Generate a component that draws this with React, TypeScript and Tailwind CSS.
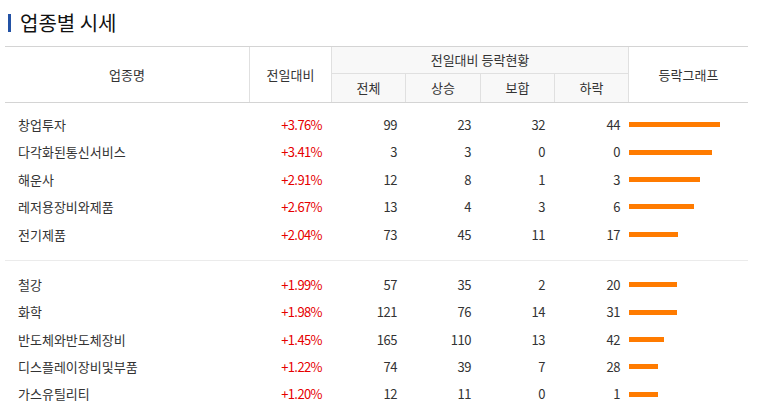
import React from 'react';

type Row = {
  name: string;
  rate: string;
  total: number;
  up: number;
  flat: number;
  down: number;
  bar: number;
};

const groups: Row[][] = [
  [
    { name: '창업투자', rate: '+3.76%', total: 99, up: 23, flat: 32, down: 44, bar: 91 },
    { name: '다각화된통신서비스', rate: '+3.41%', total: 3, up: 3, flat: 0, down: 0, bar: 83 },
    { name: '해운사', rate: '+2.91%', total: 12, up: 8, flat: 1, down: 3, bar: 71 },
    { name: '레저용장비와제품', rate: '+2.67%', total: 13, up: 4, flat: 3, down: 6, bar: 65 },
    { name: '전기제품', rate: '+2.04%', total: 73, up: 45, flat: 11, down: 17, bar: 49 },
  ],
  [
    { name: '철강', rate: '+1.99%', total: 57, up: 35, flat: 2, down: 20, bar: 48 },
    { name: '화학', rate: '+1.98%', total: 121, up: 76, flat: 14, down: 31, bar: 48 },
    { name: '반도체와반도체장비', rate: '+1.45%', total: 165, up: 110, flat: 13, down: 42, bar: 35 },
    { name: '디스플레이장비및부품', rate: '+1.22%', total: 74, up: 39, flat: 7, down: 28, bar: 29 },
    { name: '가스유틸리티', rate: '+1.20%', total: 12, up: 11, flat: 0, down: 1, bar: 29 },
  ],
];

const cols = 'grid grid-cols-[245px_82px_74px_75px_74px_74px_119px]';

function DataRow({ row }: { row: Row }) {
  return (
    <div className={`${cols} h-[27.4px] items-center text-[13px] text-[#333]`}>
      <div className="pl-[13px]">{row.name}</div>
      <div className="pr-[10px] text-right text-[#e60000] tracking-[-0.6px]">{row.rate}</div>
      <div className="pr-[9px] text-right tracking-[-0.5px]">{row.total}</div>
      <div className="pr-[10px] text-right tracking-[-0.5px]">{row.up}</div>
      <div className="pr-[10px] text-right tracking-[-0.5px]">{row.flat}</div>
      <div className="pr-[9px] text-right tracking-[-0.5px]">{row.down}</div>
      <div className="flex items-center">
        <span className="block h-[5px] bg-[#ff7b00]" style={{ width: row.bar }} />
      </div>
    </div>
  );
}

export default function App() {
  return (
    <div
      className="w-[763px] h-[414px] overflow-hidden bg-white"
      style={{ fontFamily: '"Noto Sans CJK KR", "Noto Sans", sans-serif' }}
    >
      {/* Title */}
      <div className="h-[46px] flex items-center pl-[8px]">
        <span className="block w-[3px] h-[18px] bg-[#2352a5]" />
        <h2 className="ml-[9px] text-[20px] leading-none text-[#111] font-normal">업종별 시세</h2>
      </div>

      <div className="ml-[5px] w-[743px]">
        {/* Header */}
        <div className={`${cols} grid-rows-[27px_28px] border-t border-b border-[#d4d4d4] text-[13px] text-[#333]`}>
          <div className="row-span-2 flex items-center justify-center border-r border-[#e0e0e0]">업종명</div>
          <div className="row-span-2 flex items-center justify-center border-r border-[#e0e0e0]">전일대비</div>
          <div className="col-span-4 flex items-center justify-center bg-[#f8f8f8] border-r border-b border-[#e0e0e0]">
            전일대비 등락현황
          </div>
          <div className="row-span-2 flex items-center justify-center">등락그래프</div>
          <div className="flex items-center justify-center bg-[#f8f8f8] border-r border-[#e0e0e0]">전체</div>
          <div className="flex items-center justify-center bg-[#f8f8f8] border-r border-[#e0e0e0]">상승</div>
          <div className="flex items-center justify-center bg-[#f8f8f8] border-r border-[#e0e0e0]">보합</div>
          <div className="flex items-center justify-center bg-[#f8f8f8] border-r border-[#e0e0e0]">하락</div>
        </div>

        {/* Body */}
        <div className="pt-[8px] pb-[12px] border-b border-[#ebebeb]">
          {groups[0].map((r) => (
            <DataRow key={r.name} row={r} />
          ))}
        </div>
        <div className="pt-[10px]">
          {groups[1].map((r) => (
            <DataRow key={r.name} row={r} />
          ))}
        </div>
      </div>
    </div>
  );
}
